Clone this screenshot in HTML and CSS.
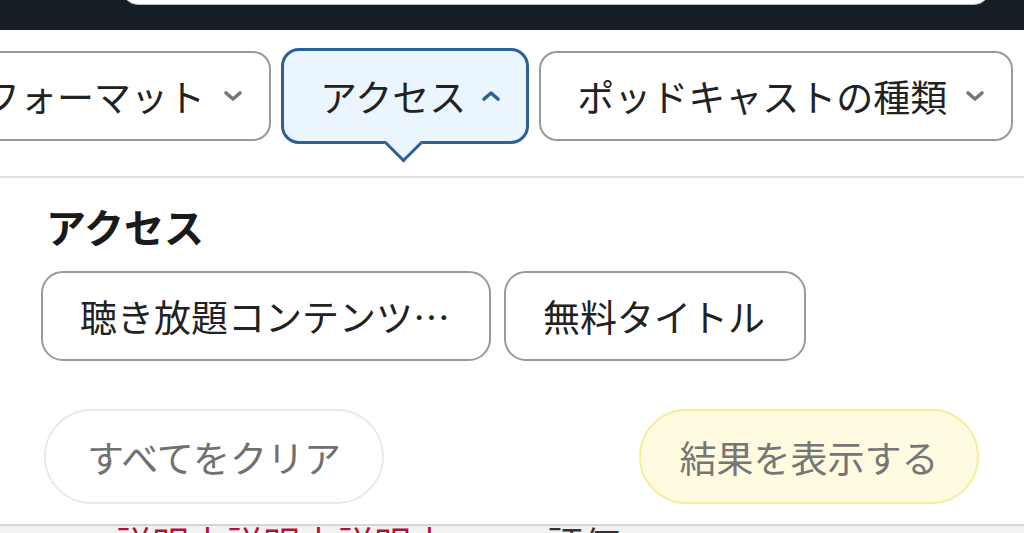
FILE: index.html
```html
<!DOCTYPE html>
<html lang="ja">
<head>
    <meta charset="UTF-8">
    <meta name="viewport" content="width=device-width, initial-scale=1.0">
    <title>アクセス</title>
    <link rel="stylesheet" href="styles.css">
</head>
<body>
    <div class="topbar">
        <div class="searchBox"></div>
    </div>

    <div class="filterRow">
        <button class="filterChip">
            <span>フォーマット</span>
            <svg class="chevron" viewBox="0 0 20 12"><path d="M3 3 L10 9 L17 3"/></svg>
        </button>
        <button class="filterChip active">
            <span>アクセス</span>
            <svg class="chevron" viewBox="0 0 20 12"><path d="M3 9 L10 3 L17 9"/></svg>
        </button>
        <button class="filterChip">
            <span>ポッドキャストの種類</span>
            <svg class="chevron" viewBox="0 0 20 12"><path d="M3 3 L10 9 L17 3"/></svg>
        </button>
    </div>

    <div class="panel">
        <h2 class="panelTitle">アクセス</h2>
        <div class="options">
            <button class="optionChip">聴き放題コンテンツ…</button>
            <button class="optionChip">無料タイトル</button>
        </div>
        <div class="actions">
            <button class="clearBtn">すべてをクリア</button>
            <button class="resultBtn">結果を表示する</button>
        </div>
    </div>

    <div class="behind">
        <span class="behindRed">説明文説明文説明文</span>
        <span class="behindDark">評価</span>
    </div>
</body>
</html>
```

FILE: styles.css
```css
body {
    margin: 0;
    width: 1024px;
    height: 533px;
    overflow: hidden;
    background-color: #fff;
    font-family: "Noto Sans CJK JP", "Noto Sans", sans-serif;
    color: #222;
}
button {
    font-family: inherit;
    cursor: pointer;
}
.topbar {
    height: 30px;
    background-color: #161e26;
    overflow: hidden;
}
.searchBox {
    margin: -35px 0 0 122px;
    width: 866px;
    height: 38px;
    background-color: #fff;
    border: 1px solid #b8bcbf;
    border-radius: 16px;
}
.filterRow {
    display: flex;
    align-items: center;
    gap: 10px;
    margin-left: -55px;
    padding-top: 18px;
    height: 96px;
}
.filterChip {
    position: relative;
    flex: none;
    display: flex;
    align-items: center;
    gap: 18px;
    height: 90px;
    padding: 0 26px 0 36px;
    background-color: #fff;
    border: 2px solid #999;
    border-radius: 18px;
    font-size: 37px;
    color: #222;
    white-space: nowrap;
}
.filterChip .chevron {
    width: 20px;
    height: 12px;
    fill: none;
    stroke: #777;
    stroke-width: 3.6;
    stroke-linecap: round;
    stroke-linejoin: round;
}
.filterChip.active {
    height: 96px;
    padding: 0 25px 0 36px;
    background-color: #eaf5fd;
    border: 3px solid #2a6199;
    gap: 15px;
}
.filterChip.active .chevron {
    stroke: #2a6199;
}
.filterChip.active::after {
    content: "";
    position: absolute;
    left: 50%;
    bottom: -16px;
    width: 24px;
    height: 24px;
    margin-left: -15px;
    background-color: #eaf5fd;
    border-right: 3px solid #2a6199;
    border-bottom: 3px solid #2a6199;
    transform: rotate(45deg);
}
.panel {
    margin-top: 32px;
    border-top: 2px solid #e2e2e2;
    padding: 0 45px 0 44px;
}
.panelTitle {
    margin: 24px 0 0 2px;
    font-size: 40px;
    line-height: 48px;
    font-weight: bold;
    color: #1a1a1a;
}
.options {
    display: flex;
    gap: 13px;
    margin: 21px 0 0 -3px;
}
.optionChip {
    height: 90px;
    padding: 0 39px 0 37px;
    background-color: #fff;
    border: 2px solid #999;
    border-radius: 22px;
    font-size: 37px;
    color: #222;
    white-space: nowrap;
}
.actions {
    display: flex;
    justify-content: space-between;
    margin-top: 48px;
}
.clearBtn,
.resultBtn {
    height: 95px;
    width: 340px;
    border-radius: 48px;
    font-size: 37px;
    white-space: nowrap;
}
.clearBtn {
    background-color: #fff;
    border: 2px solid #e9e9e9;
    color: #707070;
}
.resultBtn {
    background-color: #fffae0;
    border: 2px solid #f6ec99;
    color: #767676;
}
.behind {
    margin-top: 20px;
    border-top: 2px solid #d6d6d6;
    background-color: #f2f2f2;
    height: 40px;
    padding-left: 115px;
    font-size: 37px;
    line-height: 34px;
    white-space: nowrap;
}
.behindRed {
    color: #b0103a;
}
.behindDark {
    margin-left: 90px;
    color: #333;
}
```
